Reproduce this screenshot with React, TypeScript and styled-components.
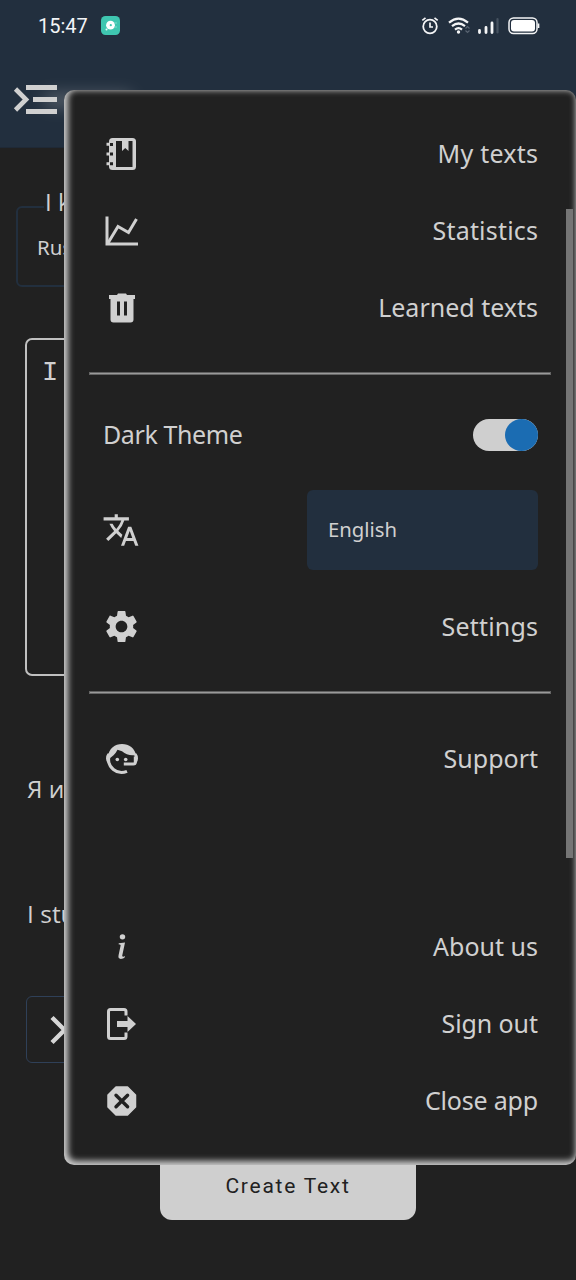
import React from "react";
import styled, { createGlobalStyle } from "styled-components";
import { MdTranslate, MdSettings } from "react-icons/md";
import { BsInfoLg } from "react-icons/bs";

const ink = "#d0d0d0";
const navy = "#222f3e";
const dark = "#212121";

const GlobalStyle = createGlobalStyle`
  * { box-sizing: border-box; }
  body { margin: 0; background: ${dark}; color: ${ink}; font-family: "Noto Sans", "Open Sans", sans-serif; }
`;

const Screen = styled.div`
  position: relative;
  width: 576px;
  height: 1280px;
  overflow: hidden;
  background: ${dark};
`;

const Header = styled.header`
  height: 148px;
  background: ${navy};
  border-bottom: 1px solid #1f2936;
`;

const StatusBar = styled.div`
  height: 50px;
  padding: 1px 36px 0 38px;
  display: flex;
  align-items: center;
  justify-content: space-between;
`;

const StatusGroup = styled.div`
  display: flex;
  align-items: center;
`;

const Clock = styled.span`
  width: 63px;
  color: #f2f4f6;
  font: 400 20px/24px Roboto, sans-serif;
`;

const Toolbar = styled.div`
  display: flex;
  align-items: center;
  height: 98px;
  padding: 2px 0 0 13px;
`;

const TitleGlow = styled.div`
  width: 90px;
  height: 14px;
  margin-left: -16px;
  border-radius: 8px;
  background: #cfcfcf;
  opacity: 0.3;
  filter: blur(8px);
`;

const Page = styled.main`
  display: flex;
  flex-direction: column;
  align-items: flex-start;
`;

const LanguageField = styled.fieldset`
  width: 250px;
  height: 98px;
  margin: 41px 0 0 16px;
  padding: 8px 0 0 19px;
  border: 2px solid ${navy};
  border-radius: 6px;
  font-size: 20.5px;
  line-height: 28px;
`;

const FieldLegend = styled.legend`
  margin-left: 7px;
  padding: 0 3px 0 1px;
  height: 36px;
  font-family: "Open Sans", sans-serif;
  font-size: 24px;
  line-height: 25px;
  white-space: nowrap;
`;

const TextBox = styled.div`
  width: 524px;
  height: 338px;
  margin: 51px 0 0 25px;
  padding: 17px 15px;
  border: 2px solid #c0c0c0;
  border-radius: 7px;
  font: 400 27px/32px "Liberation Mono", monospace;
`;

const Sentence = styled.p<{ $top: number }>`
  margin: ${(p) => p.$top}px 0 0 27px;
  font-family: "Open Sans", sans-serif;
  font-size: 24.5px;
  line-height: 34px;
  white-space: nowrap;
`;

const NextButton = styled.div`
  display: flex;
  align-items: center;
  width: 200px;
  height: 67px;
  margin: 65px 0 0 26px;
  padding-left: 22px;
  border: 1px solid #2f4058;
  border-radius: 6px;
`;

const CreateButton = styled.button`
  align-self: center;
  width: 256px;
  height: 67px;
  margin-top: 90px;
  padding: 0 0 2px;
  border: 0;
  border-radius: 12px;
  background: #cfcfcf;
  color: ${dark};
  font: 400 21px Roboto, sans-serif;
  letter-spacing: 1.75px;
`;

const Panel = styled.nav`
  position: absolute;
  top: 90px;
  left: 64px;
  width: 512px;
  height: 1075px;
  padding: 25px 38px 0;
  border-radius: 10px;
  background: ${dark};
  box-shadow: inset 2px -2px 6px 2px #cfcfcf;
`;

const PanelRow = styled.div<{ $height?: number }>`
  display: flex;
  align-items: center;
  justify-content: space-between;
  height: ${(p) => p.$height ?? 77}px;
`;

const Label = styled.span<{ $spacing?: number }>`
  font-size: 25px;
  line-height: 34px;
  letter-spacing: ${(p) => p.$spacing ?? 0}px;
  margin-right: ${(p) => -(p.$spacing ?? 0)}px;
  padding: 0 0 2px 1px;
`;

const Divider = styled.hr<{ $above: number; $below: number }>`
  height: 3px;
  margin: ${(p) => p.$above}px -13px ${(p) => p.$below}px -13px;
  border: 1px solid #666;
  border-top-color: #606060;
  background: #9a9a9a;
`;

const IconSlot = styled.span<{ $width?: number }>`
  display: flex;
  align-items: center;
  justify-content: center;
  width: ${(p) => p.$width ?? 40}px;
  height: 40px;
  color: ${ink};
`;

const Switch = styled.span`
  display: flex;
  justify-content: flex-end;
  width: 65px;
  height: 32px;
  border-radius: 16px;
  background: #cfcfcf;
`;

const Knob = styled.span`
  width: 33px;
  height: 32px;
  border-radius: 50%;
  background: #1b6cb2;
`;

const Select = styled.div`
  display: flex;
  align-items: center;
  width: 231px;
  height: 80px;
  padding: 0 0 1px 21px;
  border-radius: 6px;
  background: ${navy};
  font-size: 20.3px;
`;

const Scrollbar = styled.div`
  position: absolute;
  top: 119px;
  right: 3px;
  width: 7px;
  height: 649px;
  background: #757575;
`;

const Spacer = styled.div<{ $height: number }>`
  height: ${(p) => p.$height}px;
`;

const MenuIcon = () => (
  <svg width="46" height="32" viewBox="0 0 46 32" fill={ink}>
    <path d="M13 1h31v5H13zM20 13h24v5H20zM13 25h31v5H13z" />
    <path d="M2.500 5l10.500 10.500L2.500 26" fill="none" stroke={ink} strokeWidth="4.600" />
  </svg>
);

const AppBadge = () => (
  <svg width="19" height="19" viewBox="0 0 19 19">
    <rect width="19" height="19" rx="4.500" fill="#3fc6b0" />
    <circle cx="9.500" cy="9.200" r="4.400" fill="#fff" />
    <circle cx="9.800" cy="9.200" r="1.100" fill="#3fc6b0" />
    <circle cx="5.500" cy="13.500" r="1" fill="#e8fffb" />
    <path d="M13 7h3M13 11h3" stroke="#8ee3d5" strokeWidth=".8" />
  </svg>
);

const StatusIcons = () => (
  <svg width="120" height="22" viewBox="0 0 120 22" fill="none" stroke="#f4f5f6">
    <circle cx="10" cy="11.500" r="6.800" strokeWidth="1.800" />
    <path d="M10 7.500v4.500h3M2.300 5.300l3.200-2.500M17.700 5.300l-3.200-2.500" strokeWidth="1.700" />
    <path d="M29 7.600Q38.500-.4 48 7.600M32 11.200q6.500-5.400 13 0M35 14.600q3.500-3 7 0" strokeWidth="2.200" />
    <circle cx="38.500" cy="17" r="1.700" fill="#f4f5f6" stroke="none" />
    <path d="M45.500 13.500l2-2 2 2M45.500 15.500l2 2 2-2" stroke="#596472" strokeWidth="1.200" />
    <g strokeWidth="2.800" strokeLinecap="round">
      <path d="M59.500 15.500v2M66 12.500v5M72 8v9.500" />
      <path d="M77.500 4v13.500" stroke="#465260" strokeWidth="2.200" />
    </g>
    <rect x="89" y="3" width="28" height="15.500" rx="4.500" strokeWidth="1.500" />
    <rect x="91" y="5" width="24" height="11.500" rx="3" fill="#fff" stroke="none" />
    <path d="M118.500 8.500v4.500" strokeWidth="1.700" />
  </svg>
);

const ChevronIcon = () => (
  <svg width="24" height="32" viewBox="0 0 24 32" fill="none" stroke="#d6d6d6" strokeWidth="4.400">
    <path d="M3 3.500L15.500 16 3 28.500" />
  </svg>
);

const NotebookIcon = () => (
  <svg width="34" height="36" viewBox="0 0 34 36">
    <rect x="4" y="2" width="27" height="32" rx="3.500" fill={ink} />
    <path d="M11 5h16.500v26H11z" fill={dark} />
    <path d="M17 4h6.500v11l-3.250-3-3.250 3z" fill={ink} />
    <path d="M1.500 6.800h4v3h-4zM1.500 16.500h4v3h-4zM1.500 26.300h4v3h-4z" fill={ink} />
    <path d="M5 7h3v3H5zM5 16.600h3v3H5zM5 26.200h3v3H5z" fill={dark} />
  </svg>
);

const ChartIcon = () => (
  <svg width="34" height="32" viewBox="0 0 34 32" fill="none" stroke={ink}>
    <path d="M2 1.500v27.500h31" strokeWidth="3" />
    <path d="M3 28L13 11.500l10.500 6L31.500 4" strokeWidth="3" />
  </svg>
);

const TrashIcon = () => (
  <svg width="28" height="32" viewBox="0 0 28 32">
    <path d="M1 3h8l1-1.500h8l1 1.500h8v4h-1.500v20.500q0 3-3 3h-17q-3 0-3-3V7H1z" fill={ink} />
    <path d="M9 9.500h3v14H9zM16 9.500h3v14h-3z" fill={dark} />
  </svg>
);

const SupportIcon = () => (
  <svg width="34" height="32" viewBox="0 0 34 32">
    <path
      d="M4 13.500A13 13 0 0 0 22 28.300M30.300 13.500v5.500q0 2-2 2h-9.500"
      fill="none"
      stroke={ink}
      strokeWidth="3"
    />
    <path
      d="M2.500 14.500C4 5 10 1 17 1s13 4 14.500 12.500l-3-1.200c-4 .3-8-.8-11.500-4l-4.500-1.500C10.500 11 7 14 3.500 16z"
      fill={ink}
    />
    <path d="M4 10.500H2.500Q1 12.500 1 15.500t2 5h2zM30 10.500h1.500q1.500 2 1.500 5t-2 5h-2z" fill={ink} />
    <circle cx="12.300" cy="16.500" r="1.800" fill={ink} />
    <circle cx="20.700" cy="16.500" r="1.800" fill={ink} />
  </svg>
);

const SignOutIcon = () => (
  <svg width="34" height="36" viewBox="0 0 34 36">
    <path d="M21 9.500V5.500q0-2-2-2H5.500q-2 0-2 2v25q0 2 2 2H19q2 0 2-2v-4" fill="none" stroke={ink} strokeWidth="3" />
    <path d="M12 15h10.500v-5l8.500 8-8.500 8v-5H12z" fill={ink} />
  </svg>
);

const CloseIcon = () => (
  <svg width="32" height="32" viewBox="0 0 32 32">
    <path d="M10 2h11.500l8 8v12l-8 8H10l-8-8V10z" fill={ink} stroke={ink} strokeWidth="1.500" strokeLinejoin="round" />
    <path d="M10 10.200l11.600 11.600M21.600 10.200L10 21.800" stroke={dark} strokeWidth="3.400" strokeLinecap="round" />
  </svg>
);

interface MenuItemProps {
  icon: React.ReactNode;
  text: string;
  spacing?: number;
  slot?: number;
}

const MenuItem = ({ icon, text, spacing, slot }: MenuItemProps) => (
  <PanelRow>
    <IconSlot $width={slot}>{icon}</IconSlot>
    <Label $spacing={spacing}>{text}</Label>
  </PanelRow>
);

export default function App() {
  return (
    <Screen>
      <GlobalStyle />
      <Header>
        <StatusBar>
          <StatusGroup>
            <Clock>15:47</Clock>
            <AppBadge />
          </StatusGroup>
          <StatusIcons />
        </StatusBar>
        <Toolbar>
          <MenuIcon />
          <TitleGlow />
        </Toolbar>
      </Header>
      <Page>
        <LanguageField>
          <FieldLegend>I k</FieldLegend>
          Rus
        </LanguageField>
        <TextBox>I</TextBox>
        <Sentence $top={96}>Я и</Sentence>
        <Sentence $top={91}>I stu</Sentence>
        <NextButton>
          <ChevronIcon />
        </NextButton>
        <CreateButton>Create Text</CreateButton>
      </Page>
      <Panel>
        <MenuItem icon={<NotebookIcon />} text="My texts" spacing={0.25} />
        <MenuItem icon={<ChartIcon />} text="Statistics" spacing={0.2} />
        <MenuItem icon={<TrashIcon />} text="Learned texts" />
        <Divider $above={26} $below={21} />
        <PanelRow>
          <Label $spacing={-0.4}>Dark Theme</Label>
          <Switch>
            <Knob />
          </Switch>
        </PanelRow>
        <PanelRow $height={113}>
          <IconSlot $width={38}>
            <MdTranslate size={38} />
          </IconSlot>
          <Select>English</Select>
        </PanelRow>
        <Spacer $height={2} />
        <MenuItem icon={<MdSettings size={39} />} text="Settings" spacing={0.2} slot={39} />
        <Divider $above={26} $below={26} />
        <MenuItem icon={<SupportIcon />} text="Support" />
        <Spacer $height={111} />
        <MenuItem icon={<BsInfoLg size={33} />} text="About us" slot={38} />
        <MenuItem icon={<SignOutIcon />} text="Sign out" spacing={-0.1} />
        <MenuItem icon={<CloseIcon />} text="Close app" spacing={-0.2} />
        <Scrollbar />
      </Panel>
    </Screen>
  );
}
